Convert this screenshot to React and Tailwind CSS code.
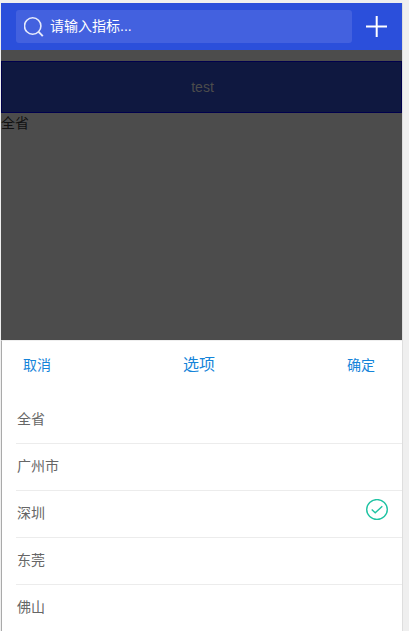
const options = ['全省', '广州市', '深圳', '东莞', '佛山'];

function SearchIcon() {
  return (
    <svg className="h-5 w-5 shrink-0" viewBox="0 0 20 20" fill="none" stroke="#e6eafc" strokeWidth="1.6">
      <circle cx="8.7" cy="9" r="8.2" />
      <path d="M14.6 14.9l4.2 4.2" strokeWidth="2" />
    </svg>
  );
}

function CheckIcon() {
  return (
    <svg className="h-[22px] w-[22px] shrink-0" viewBox="0 0 22 22" fill="none" stroke="#1fc3a3" strokeWidth="1.4">
      <ellipse cx="11" cy="10.5" rx="10.3" ry="9.9" />
      <path d="M5.7 10.6l3.5 3.2 7.1-6.5" />
    </svg>
  );
}

export default function App() {
  return (
    <div className="h-[631px] w-[409px] overflow-hidden bg-[#efefef] pt-[3px] pl-px font-['Liberation_Sans','Noto_Sans_CJK_SC',sans-serif] text-sm">
      <div className="flex h-[628px] w-[402px] flex-col border-r border-[#dedede] bg-[#4c4c4c]">
        <header className="flex h-[47px] shrink-0 items-center bg-[#2b4fdb] pl-[15px]">
          <div className="flex h-[33px] w-[336px] items-center rounded-[3px] bg-[#4361df] pl-2 text-white">
            <SearchIcon />
            <span className="ml-1.5 pb-0.5 leading-5">请输入指标...</span>
          </div>
          <svg className="ml-[14px] h-[21px] w-[21px]" viewBox="0 0 21 21" stroke="#fff" strokeWidth="2">
            <path d="M0 10.5h21M10.7 0v21" />
          </svg>
        </header>
        <div className="mt-[11px] flex h-[52px] shrink-0 items-center justify-center border border-[#00004c] bg-[#0f1840] pl-0.5 text-[#4c4c4c]">
          test
        </div>
        <div className="h-[227px] shrink-0 leading-5 text-[#111]">全省</div>
        <section className="flex-1 overflow-hidden border-t border-l border-t-[#eeeeee] border-l-[#aaaaaa] bg-white">
          <div className="flex h-12 items-center justify-between pr-[27px] pl-[21px] text-[#1584d9]">
            <button>取消</button>
            <span className="text-base">选项</span>
            <button>确定</button>
          </div>
          <ul className="mt-2 pl-[14px] text-[#666]">
            {options.map((name) => (
              <li key={name} className="flex h-[47px] items-start justify-between border-b border-[#ececec] pr-[14px]">
                <span className="pt-3 pl-px leading-5">{name}</span>
                {name === '深圳' && <div className="pt-2"><CheckIcon /></div>}
              </li>
            ))}
          </ul>
        </section>
      </div>
    </div>
  );
}
